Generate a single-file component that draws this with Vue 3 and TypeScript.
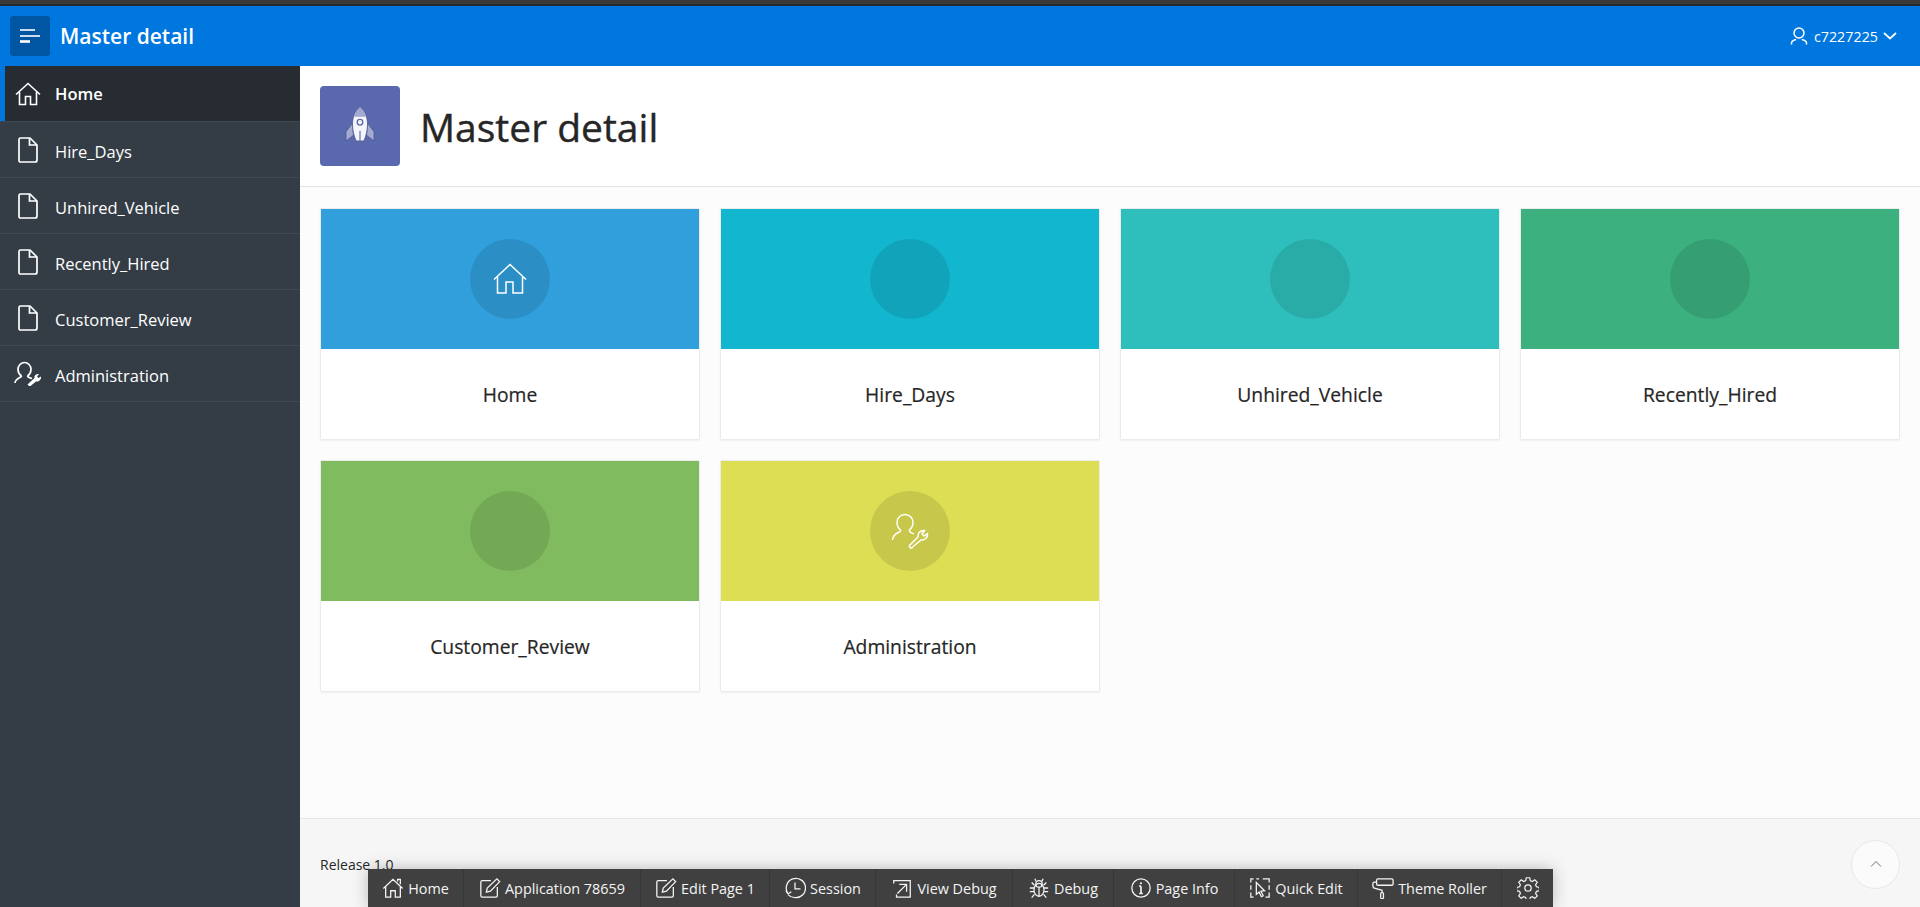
<script setup lang="ts">
interface Item { label: string; icon: 'home' | 'file' | 'admin' }
interface Card { label: string; color: string; icon?: 'home' | 'admin' }
interface Tool { label: string; icon: string; width: number }

const navItems: Item[] = [
  { label: 'Home', icon: 'home' },
  { label: 'Hire_Days', icon: 'file' },
  { label: 'Unhired_Vehicle', icon: 'file' },
  { label: 'Recently_Hired', icon: 'file' },
  { label: 'Customer_Review', icon: 'file' },
  { label: 'Administration', icon: 'admin' },
]
const cards: Card[] = [
  { label: 'Home', color: '#309fdb', icon: 'home' },
  { label: 'Hire_Days', color: '#13b6cf' },
  { label: 'Unhired_Vehicle', color: '#2ebfbc' },
  { label: 'Recently_Hired', color: '#3cb07f' },
  { label: 'Customer_Review', color: '#81bb5f' },
  { label: 'Administration', color: '#dede55', icon: 'admin' },
]
const tools: Tool[] = [
  { label: 'Home', icon: 'home', width: 96 },
  { label: 'Application 78659', icon: 'edit', width: 177 },
  { label: 'Edit Page 1', icon: 'edit', width: 129 },
  { label: 'Session', icon: 'session', width: 106 },
  { label: 'View Debug', icon: 'view', width: 137 },
  { label: 'Debug', icon: 'bug', width: 101 },
  { label: 'Page Info', icon: 'info', width: 121 },
  { label: 'Quick Edit', icon: 'quick', width: 123 },
  { label: 'Theme Roller', icon: 'roller', width: 144 },
  { label: '', icon: 'gear', width: 51 },
]
</script>

<template>
  <div class="page">
    <div class="strip"></div>
    <header class="topbar">
      <button class="menu" aria-label="Menu">
        <svg width="20" height="14" viewBox="0 0 20 14"><path d="M0 1h15" stroke="#fff" stroke-width="1.600"/><path d="M0 7h20" stroke="#fff" stroke-width="1.600"/><path d="M0 12.500h10" stroke="#fff" stroke-width="2.600"/></svg>
      </button>
      <span class="brand">Master detail</span>
      <span class="user">
        <svg width="20" height="20" viewBox="0 0 20 20" fill="none" stroke="#fff" stroke-width="1.500"><circle cx="10" cy="7" r="5"/><path d="M2.500 18.500v-1.500c0-2.200 2.500-3 4.700-3.500M17.500 18.500v-1.500c0-2.200-2.500-3-4.700-3.500"/></svg>
        <span class="uname">c7227225</span>
        <svg width="14" height="8" viewBox="0 0 14 8" fill="none" stroke="#fff" stroke-width="1.700"><path d="M1 1l6 5.500L13 1"/></svg>
      </span>
    </header>

    <div class="body">
      <nav class="side">
        <a v-for="(n, i) in navItems" :key="n.label" class="nav" :class="{ active: i === 0 }">
          <span class="nav-ic">
            <svg v-if="n.icon === 'home'" width="26" height="24" viewBox="0 0 26 24" fill="none" stroke="#fff" stroke-width="1.600"><path d="M1 12.500L13 1.500l12 11M4.500 10v12.500H10.500v-8h5v8h6V10"/></svg>
            <svg v-else-if="n.icon === 'file'" width="20" height="26" viewBox="0 0 20 26" fill="none" stroke="#fff" stroke-width="1.700"><path d="M2.500 1h9.500l7 7v15a2 2 0 0 1-2 2H2.500a1.500 1.500 0 0 1-1.500-1.500v-21A1.500 1.500 0 0 1 2.500 1zM11.500 1.500V8H18.500"/></svg>
            <svg v-else width="28" height="26" viewBox="0 0 28 26" fill="none" stroke="#fff" stroke-width="1.700"><path d="M7.500 15C5.500 13.500 4 11.500 4 8.500 4 4.500 7 1.500 10.500 1.500S17 4.500 17 8.500c0 3-1.500 5-3.500 6.500"/><path d="M7.500 15c-.5 2-6 2-6.500 7M13.500 15c.5 1.500 2.500 2 4.500 2.500"/><path d="M15 25l-1.500-1.500 7-6.500c-.5-2 1-4 4.500-4l-2 2.500 1.500 1.500 2.500-1.500c.5 3-2 5.500-5 5L16.500 25z" fill="#fff" stroke="none"/></svg>
          </span>
          <span class="nav-label">{{ n.label }}</span>
        </a>
      </nav>

      <main class="main">
        <section class="hero">
          <div class="hero-ic">
            <svg width="30" height="40" viewBox="0 0 32 42">
              <path d="M8 18L1 27v10l8-6zM24 18l7 9v10l-8-6z" fill="#a2aad2" stroke="#454f8c" stroke-width=".8"/>
              <path d="M16 1c-5 4-8 10-8 18 0 7 2 14 4 18h8c2-4 4-11 4-18 0-8-3-14-8-18z" fill="#f5f6fb" stroke="#454f8c" stroke-width=".8"/>
              <path d="M16 1c-3 2.500-5 5-6.500 10h13C21 6 19 3.500 16 1z" fill="#a2aad2"/>
              <circle cx="16" cy="17" r="3" fill="#f5f6fb" stroke="#5a68ad" stroke-width="1.400"/>
              <path d="M16 26v15" stroke="#5a68ad" stroke-width="1.200"/>
            </svg>
          </div>
          <h1>Master detail</h1>
        </section>

        <section class="cards">
          <article v-for="c in cards" :key="c.label" class="card">
            <div class="card-top" :style="{ background: c.color }">
              <div class="circle">
                <svg v-if="c.icon === 'home'" width="34" height="32" viewBox="0 0 34 32" fill="none" stroke="#fff" stroke-width="1.500"><path d="M1 16.500L17 1.500l16 15M4.500 14v16H13V19h7v11h9.500V14"/></svg>
                <svg v-else-if="c.icon === 'admin'" width="38" height="38" viewBox="0 0 38 38" fill="none" stroke="#fff" stroke-width="1.500"><path d="M10 18.500C7.500 16.500 6 14 6 10.500 6 6 9.500 2.500 14 2.500s8 3.500 8 8c0 3.500-1.500 6-4 8"/><path d="M10 18.500c-1 2.500-8 2-8.500 9.500M18 18.500c.5 2 3 2.500 5 3.500"/><path d="M21 36c-1.500.5-3-1-2.500-2.500L27 25c-.5-3.500 2-7 6.500-6.500L31 22l2 2 3.500-2.500c.5 4-3 7-6.500 6.500l-9 7.500z"/></svg>
              </div>
            </div>
            <div class="card-body"><span class="card-label">{{ c.label }}</span></div>
          </article>
        </section>

        <footer class="foot">
          <span class="release">Release 1.0</span>
          <button class="totop" aria-label="Top">
            <svg width="12" height="8" viewBox="0 0 12 8" fill="none" stroke="#707070" stroke-width="1"><path d="M1 6.500l5-5 5 5"/></svg>
          </button>
        </footer>
      </main>
    </div>

    <div class="devbar">
      <a v-for="t in tools" :key="t.icon + t.label" class="tool" :style="{ width: t.width + 'px' }">
        <svg width="22" height="22" viewBox="0 0 24 24" fill="none" stroke="#f4f4f4" stroke-width="1.400">
          <path v-if="t.icon === 'home'" d="M1.500 12.500L12 2.500l10.500 10M4 10.500V22h5.500v-7h5v7H20V10.500M17 5V2.500h3V8"/>
          <template v-else-if="t.icon === 'edit'">
            <path d="M13 4H3.500A1.500 1.500 0 0 0 2 5.500v15A1.500 1.500 0 0 0 3.500 22h15a1.500 1.500 0 0 0 1.500-1.500V11"/>
            <path d="M8 16.500l1-4.500L19.500 2l3 3L12.500 15.500z"/>
          </template>
          <template v-else-if="t.icon === 'session'">
            <path d="M4 17.500A10.500 10.500 0 1 1 12 22.500c-3 0-5.500-1.200-7.500-3"/>
            <path d="M12 6v7h6M2 15l2.500 3.500L8 16"/>
          </template>
          <template v-else-if="t.icon === 'view'">
            <path d="M3 7V4h18v18H6v-3"/>
            <path d="M7 18L17 8M9 8h8v8"/>
          </template>
          <template v-else-if="t.icon === 'bug'">
            <ellipse cx="12" cy="14" rx="5.500" ry="7"/>
            <circle cx="12" cy="7.500" r="3.500"/>
            <path d="M12 11v10M7 12H2M17 12h5M6.500 16H2M17.500 16H22M7 19l-3 3.500M17 19l3 3.500M7 9L4 6M17 9l3-3M9 5L7.500 2M15 5l1.500-3"/>
          </template>
          <template v-else-if="t.icon === 'info'">
            <circle cx="12" cy="12" r="10"/>
            <path d="M12 10v8M10 18h4M10 10h2" stroke-width="1.800"/>
            <circle cx="12" cy="6.800" r="1.200" fill="#f4f4f4" stroke="none"/>
          </template>
          <template v-else-if="t.icon === 'quick'">
            <path d="M5 2H2v4M2 9v5M2 17v5h3M8 2h3M15 2h7v4M22 9v5M22 17v5h-4"/>
            <path d="M8 6l9 9-4 .5 2.500 5-2 1-2.500-5-3 2.500z"/>
          </template>
          <template v-else-if="t.icon === 'roller'">
            <rect x="5" y="2" width="18" height="7" rx="1.500"/>
            <path d="M5 5.500H2.500A1.500 1.500 0 0 0 1 7v3c0 1.500 1 2.200 2.500 2.500l7.500 2V17"/>
            <rect x="9.500" y="17" width="3" height="6.500" rx="1"/>
          </template>
          <template v-else>
            <circle cx="12" cy="12" r="3.500"/>
            <path d="M10 1.500h4l.6 3.300 2.400 1 2.800-1.900 2.800 2.800-1.900 2.800 1 2.400 3.300.6v4l-3.300.6-1 2.400 1.900 2.800-2.800 2.800-2.800-1.900-2.400 1-.6 3.300h-4l-.6-3.300-2.400-1-2.800 1.900-2.800-2.800 1.900-2.800-1-2.400-3.300-.6v-4l3.300-.6 1-2.400-1.900-2.800 2.800-2.800 2.800 1.900 2.400-1z" transform="translate(.6 -.6) scale(.95)"/>
          </template>
        </svg>
        <span v-if="t.label" class="tool-label">{{ t.label }}</span>
      </a>
    </div>
  </div>
</template>

<style scoped>
.page {
  position: relative;
  height: 907px;
  overflow: hidden;
  display: flex;
  flex-direction: column;
  font-family: "Open Sans", "Noto Sans", sans-serif;
  color: #262626;
}
.strip {
  height: 6px;
  flex: none;
  background: linear-gradient(#3a3a3a 0 4px, #242a30 4px);
}
.topbar {
  height: 60px;
  flex: none;
  display: flex;
  align-items: center;
  padding: 0 23px 0 10px;
  background: #0076df;
  color: #fff;
}
.menu {
  width: 40px;
  height: 40px;
  border: 0;
  border-radius: 3px;
  padding: 0;
  background: #0056a3;
  display: flex;
  align-items: center;
  justify-content: center;
}
.brand {
  margin-left: 10px;
  font-size: 21px;
  font-weight: 600;
}
.user {
  margin-left: auto;
  display: flex;
  align-items: center;
  gap: 5px;
  font-size: 14.300px;
}
.body {
  flex: 1;
  display: flex;
  min-height: 0;
}
.side {
  width: 300px;
  flex: none;
  background: #343d46;
}
.nav {
  box-sizing: border-box;
  height: 56px;
  display: flex;
  align-items: center;
  border-bottom: 1px solid #3f4851;
  color: #fff;
  font-size: 16.500px;
}
.nav .nav-label {
  padding-top: 3px;
}
.nav.active .nav-label {
  padding-top: 0;
}
.nav.active {
  background: linear-gradient(#262c32, #262c32) no-repeat 5px 0 / 100% 100%, #0076df;
  font-weight: 600;
}
.nav-ic {
  width: 55px;
  display: flex;
  justify-content: center;
}
.main {
  flex: 1;
  min-width: 0;
  display: flex;
  flex-direction: column;
  background: #fcfcfc;
}
.hero {
  height: 121px;
  flex: none;
  box-sizing: border-box;
  display: flex;
  align-items: center;
  gap: 20px;
  padding: 0 20px;
  background: #fff;
  border-bottom: 1px solid #e4e4e4;
}
.hero-ic {
  width: 80px;
  height: 80px;
  border-radius: 4px;
  background: #5a68ad;
  display: flex;
  align-items: center;
  justify-content: center;
}
h1 {
  margin: 0;
  font-size: 39px;
  font-weight: 400;
  -webkit-text-stroke: 0.4px #262626;
}
.cards {
  flex: 1;
  display: grid;
  grid-template-columns: repeat(4, 1fr);
  grid-auto-rows: 232px;
  align-content: start;
  gap: 20px 20px;
  padding: 21px 20px 0;
}
.card {
  box-sizing: border-box;
  border: 1px solid #ebebeb;
  border-radius: 2px;
  background: #fff;
  box-shadow: 0 1px 2px rgba(0, 0, 0, 0.05);
  display: flex;
  flex-direction: column;
}
.card-top {
  height: 140px;
  flex: none;
  display: flex;
  align-items: center;
  justify-content: center;
}
.circle {
  width: 80px;
  height: 80px;
  border-radius: 50%;
  background: rgba(0, 0, 0, 0.1);
  display: flex;
  align-items: center;
  justify-content: center;
}
.card-body {
  flex: 1;
  display: flex;
  align-items: center;
  justify-content: center;
  font-size: 19.300px;
  color: #262626;
  -webkit-text-stroke: 0.2px #262626;
}
.card-label {
  padding-top: 1px;
}
.foot {
  height: 89px;
  flex: none;
  box-sizing: border-box;
  display: flex;
  align-items: center;
  justify-content: space-between;
  padding: 0 20px;
  background: #f6f6f6;
  border-top: 1px solid #e6e6e6;
}
.release {
  font-size: 14px;
  margin-top: 3px;
}
.totop {
  width: 49px;
  height: 49px;
  margin-top: 2px;
  padding: 0;
  border: 1px solid #e8e8e8;
  border-radius: 50%;
  background: #fbfbfb;
  display: flex;
  align-items: center;
  justify-content: center;
}
.devbar {
  position: absolute;
  left: 368px;
  bottom: 0;
  height: 38px;
  display: flex;
  background: #404040;
  box-shadow: 0 0 16px rgba(0, 0, 0, 0.25);
}
.tool {
  box-sizing: border-box;
  display: flex;
  align-items: center;
  justify-content: center;
  gap: 4px;
  border-right: 1px solid #373737;
  color: #f4f4f4;
  font-size: 14.400px;
  white-space: nowrap;
}
.tool:last-child {
  border-right: 0;
}
</style>
